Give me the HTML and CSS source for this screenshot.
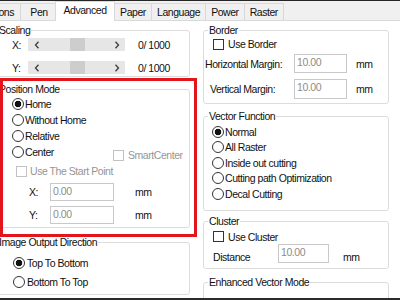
FILE: index.html
```html
<!DOCTYPE html>
<html lang="en">

<head>
    <meta charset="UTF-8">
    <meta name="viewport" content="width=device-width, initial-scale=1.0">
    <title>Advanced</title>

    <link rel="stylesheet" href="styles.css">
</head>

<body>
    <div class="window">
        <div class="tabs">
            <div class="tab tab-first">Options</div>
            <div class="tab">Pen</div>
            <div class="tab active">Advanced</div>
            <div class="tab">Paper</div>
            <div class="tab">Language</div>
            <div class="tab">Power</div>
            <div class="tab">Raster</div>
        </div>

        <div class="panel">
            <div class="col-left">
                <fieldset class="group scaling">
                    <legend>Scaling</legend>
                    <div class="scale-row">
                        <span class="axis">X:</span>
                        <div class="scroll">
                            <span class="arrow"><svg width="6" height="8" viewBox="0 0 6 8"><path d="M4.5 0.8L1.5 4l3 3.2" fill="none" stroke="#3c3c3c" stroke-width="1.3"/></svg></span>
                            <span class="track"><span class="thumb"></span></span>
                            <span class="arrow"><svg width="6" height="8" viewBox="0 0 6 8"><path d="M1.5 0.8L4.5 4l-3 3.2" fill="none" stroke="#3c3c3c" stroke-width="1.3"/></svg></span>
                        </div>
                        <span class="value">0/ 1000</span>
                    </div>
                    <div class="scale-row second">
                        <span class="axis">Y:</span>
                        <div class="scroll">
                            <span class="arrow"><svg width="6" height="8" viewBox="0 0 6 8"><path d="M4.5 0.8L1.5 4l3 3.2" fill="none" stroke="#3c3c3c" stroke-width="1.3"/></svg></span>
                            <span class="track"><span class="thumb"></span></span>
                            <span class="arrow"><svg width="6" height="8" viewBox="0 0 6 8"><path d="M1.5 0.8L4.5 4l-3 3.2" fill="none" stroke="#3c3c3c" stroke-width="1.3"/></svg></span>
                        </div>
                        <span class="value">0/ 1000</span>
                    </div>
                </fieldset>

                <fieldset class="group position">
                    <legend>Position Mode</legend>
                    <div class="opt"><span class="radio checked"></span><span class="text">Home</span></div>
                    <div class="opt"><span class="radio"></span><span class="text">Without Home</span></div>
                    <div class="opt"><span class="radio"></span><span class="text">Relative</span></div>
                    <div class="opt center-row">
                        <span class="center-main"><span class="radio"></span><span class="text">Center</span></span>
                        <span class="smart"><span class="check disabled"></span><span class="text">SmartCenter</span></span>
                    </div>
                    <div class="start-point"><span class="check disabled"></span><span class="text">Use The Start Point</span></div>
                    <div class="coord-row">
                        <span class="coord-label">X:</span>
                        <span class="field coord-field">0.00</span>
                        <span class="unit">mm</span>
                    </div>
                    <div class="coord-row second">
                        <span class="coord-label">Y:</span>
                        <span class="field coord-field">0.00</span>
                        <span class="unit">mm</span>
                    </div>
                </fieldset>

                <fieldset class="group output">
                    <legend>Image Output Direction</legend>
                    <div class="opt"><span class="radio checked"></span><span class="text">Top To Bottom</span></div>
                    <div class="opt second"><span class="radio"></span><span class="text">Bottom To Top</span></div>
                </fieldset>
            </div>

            <div class="col-right">
                <fieldset class="group border-group">
                    <legend>Border</legend>
                    <div class="check-row"><span class="check"></span><span class="text">Use Border</span></div>
                    <div class="margin-row">
                        <span class="margin-label">Horizontal Margin:</span>
                        <span class="field margin-field">10.00</span>
                        <span class="unit">mm</span>
                    </div>
                    <div class="margin-row second">
                        <span class="margin-label indent">Vertical Margin:</span>
                        <span class="field margin-field">10.00</span>
                        <span class="unit">mm</span>
                    </div>
                </fieldset>

                <fieldset class="group vector">
                    <legend>Vector Function</legend>
                    <div class="opt"><span class="radio checked"></span><span class="text">Normal</span></div>
                    <div class="opt"><span class="radio"></span><span class="text">All Raster</span></div>
                    <div class="opt"><span class="radio"></span><span class="text">Inside out cutting</span></div>
                    <div class="opt"><span class="radio"></span><span class="text">Cutting path Optimization</span></div>
                    <div class="opt"><span class="radio"></span><span class="text">Decal Cutting</span></div>
                </fieldset>

                <fieldset class="group cluster">
                    <legend>Cluster</legend>
                    <div class="check-row"><span class="check"></span><span class="text">Use Cluster</span></div>
                    <div class="distance-row">
                        <span class="distance-label">Distance</span>
                        <span class="field distance-field">10.00</span>
                        <span class="unit">mm</span>
                    </div>
                </fieldset>

                <fieldset class="group enhanced">
                    <legend>Enhanced Vector Mode</legend>
                </fieldset>
            </div>
        </div>
    </div>

    <div class="highlight"></div>
</body>

</html>
```

FILE: styles.css
```css
* {
    box-sizing: border-box;
}

html,
body {
    margin: 0;
}

body {
    width: 400px;
    height: 300px;
    overflow: hidden;
    position: relative;
    font-family: "Liberation Sans", Arial, sans-serif;
    font-size: 10.5px;
    letter-spacing: -0.45px;
    color: #111;
    background: #f0f0f0;
}

.window {
    height: 300px;
    display: flex;
    flex-direction: column;
    border-top: 1px solid #262626;
    border-bottom: 2px solid #2b2b2b;
    overflow: hidden;
}

/* tab strip */
.tabs {
    height: 19px;
    flex: none;
    display: flex;
    align-items: flex-end;
}

.tab {
    min-width: 38px;
    height: 17px;
    line-height: 16px;
    padding: 0 5px;
    margin-right: -1px;
    border: 1px solid #d9d9d9;
    border-bottom: none;
    background: #f0f0f0;
    white-space: nowrap;
    text-align: center;
}

/* only the end of this tab is in view */
.tab-first {
    flex: none;
    width: 22px;
    min-width: 0;
    margin-left: -1px;
    padding: 0 6px 0 0;
    overflow: hidden;
    direction: rtl;
    border-left: none;
}

.tab.active {
    min-width: 60px;
    height: 20px;
    line-height: 17px;
    padding: 0 6px;
    margin: 0 -1px -1px -2px;
    background: #fff;
    position: relative;
    z-index: 1;
}

.panel {
    flex: 1;
    display: flex;
    background: #fff;
    border-top: 1px solid #d9d9d9;
}

.col-left {
    flex: none;
    width: 197px;
    margin-left: -7px;
}

.col-right {
    flex: none;
    width: 186px;
    margin-left: 13px;
}

/* group boxes */
.group {
    margin: 0;
    min-width: 0;
    padding: 0 4px;
    border: 1px solid #dcdcdc;
    border-radius: 3px;
}

.group legend {
    padding: 0 1px;
    line-height: 13px;
}

.scaling {
    margin-top: 3px;
    padding-bottom: 2px;
}

.position {
    margin-top: 6px;
    padding-bottom: 3px;
}

.output {
    margin-top: 8px;
    padding-bottom: 4px;
}

.border-group {
    margin-top: 3px;
    padding-bottom: 4px;
}

.vector {
    margin-top: 6px;
    padding-top: 1px;
    padding-bottom: 8px;
}

.cluster {
    margin-top: 4px;
    padding-bottom: 5px;
}

.enhanced {
    margin-top: 7px;
    height: 60px;
}

/* scaling rows */
.scale-row {
    display: flex;
    align-items: center;
    height: 13px;
    margin-top: 1px;
    padding-left: 14px;
}

.scale-row.second {
    margin-top: 10px;
}

.axis {
    width: 16px;
}

.scroll {
    width: 97px;
    height: 13px;
    display: flex;
    background: #e6e6e6;
}

.arrow {
    width: 17px;
    display: flex;
    align-items: center;
    justify-content: center;
}

.track {
    flex: 1;
    display: flex;
}

.thumb {
    width: 15px;
    margin-left: 25px;
    background: #cdcdcd;
}

.value {
    margin-left: 13px;
}

/* radios and checks */
.opt {
    display: flex;
    align-items: center;
    height: 16px;
    padding-left: 14px;
}

.vector .opt {
    height: 15.5px;
    padding-left: 4px;
}

.output .opt {
    padding-left: 15px;
    margin-top: 6px;
}

.output .opt.second {
    margin-top: 3px;
}

.radio {
    flex: none;
    width: 12px;
    height: 12px;
    border: 1px solid #333;
    border-radius: 50%;
    background: #fff;
    margin-right: 1px;
}

.output .radio {
    margin-right: 2px;
}

.radio.checked {
    background: radial-gradient(circle, #111 0 3px, #fff 3.6px);
}

.check {
    flex: none;
    width: 11px;
    height: 11px;
    border: 1px solid #333;
    background: #fff;
    margin-right: 4px;
}

.check.disabled {
    border-color: #c2c2c2;
}

.center-main {
    display: flex;
    align-items: center;
    width: 101px;
}

.smart {
    display: flex;
    align-items: center;
    margin-top: 6px;
    color: #959595;
}

.start-point {
    display: flex;
    align-items: center;
    height: 12px;
    margin-top: 5px;
    padding-left: 18px;
    color: #959595;
}

.start-point .check {
    margin-right: 3px;
}

/* number fields */
.field {
    display: block;
    padding: 0 2px;
    border: 1px solid #c9c9c9;
    background: #fff;
    color: #8c8c8c;
    line-height: 15px;
}

.unit {
    flex: none;
}

.coord-row {
    display: flex;
    align-items: center;
    height: 18px;
    margin-top: 6px;
    padding-left: 31px;
}

.coord-row.second {
    margin-top: 5px;
}

.coord-label {
    width: 21px;
}

.coord-field {
    width: 64px;
    height: 18px;
}

.coord-row .unit {
    margin-left: 21px;
}

.check-row {
    display: flex;
    align-items: center;
    height: 12px;
    margin-top: 1px;
    padding-left: 5px;
}

.cluster .check-row {
    margin-top: 3px;
}

.margin-row {
    display: flex;
    align-items: center;
    height: 19px;
    margin-top: 4px;
    margin-left: -3px;
}

.margin-row.second {
    height: 20px;
    margin-top: 6px;
}

.margin-label {
    width: 89px;
    white-space: nowrap;
}

.margin-label.indent {
    padding-left: 5px;
}

.margin-field {
    width: 53px;
    height: 100%;
}

.margin-row .unit {
    margin-left: 9px;
}

.distance-row {
    display: flex;
    height: 19px;
    margin-top: 1px;
    padding-left: 5px;
}

.distance-label {
    width: 65px;
    align-self: flex-end;
    line-height: 13px;
    margin-bottom: -1px;
}

.distance-field {
    width: 51px;
    height: 19px;
}

.distance-row .unit {
    margin-left: 14px;
    align-self: flex-end;
    line-height: 13px;
    margin-bottom: -1px;
}

/* red annotation frame */
.highlight {
    position: absolute;
    left: 0;
    top: 78px;
    width: 197px;
    height: 159px;
    border: 3px solid #e3141c;
}
```
